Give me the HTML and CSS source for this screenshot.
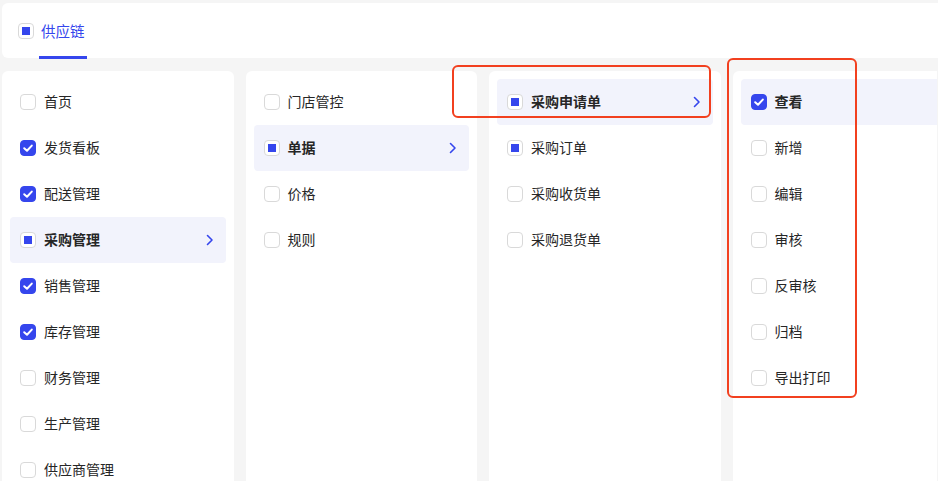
FILE: index.html
```html
<!DOCTYPE html>
<html lang="zh-CN">
<head>
<meta charset="utf-8">
<title>供应链权限</title>
<link rel="stylesheet" href="styles.css">
</head>
<body>
<div class="page">
  <div class="tabs-card">
    <div class="tab">
      <span class="cb cb-half"></span>
      <span class="tab-label">供应链</span>
    </div>
  </div>

  <div class="columns">
    <div class="col">
      <div class="row"><span class="cb"></span><span class="txt">首页</span></div>
      <div class="row"><span class="cb cb-on"><svg viewBox="0 0 16 16"><polyline points="4.2,8.2 7,10.8 11.8,5.6"/></svg></span><span class="txt">发货看板</span></div>
      <div class="row"><span class="cb cb-on"><svg viewBox="0 0 16 16"><polyline points="4.2,8.2 7,10.8 11.8,5.6"/></svg></span><span class="txt">配送管理</span></div>
      <div class="row row-active"><span class="cb cb-half"></span><span class="txt">采购管理</span><svg class="chev" viewBox="0 0 8 12"><polyline points="1.5,1.5 6,6 1.5,10.5"/></svg></div>
      <div class="row"><span class="cb cb-on"><svg viewBox="0 0 16 16"><polyline points="4.2,8.2 7,10.8 11.8,5.6"/></svg></span><span class="txt">销售管理</span></div>
      <div class="row"><span class="cb cb-on"><svg viewBox="0 0 16 16"><polyline points="4.2,8.2 7,10.8 11.8,5.6"/></svg></span><span class="txt">库存管理</span></div>
      <div class="row"><span class="cb"></span><span class="txt">财务管理</span></div>
      <div class="row"><span class="cb"></span><span class="txt">生产管理</span></div>
      <div class="row"><span class="cb"></span><span class="txt">供应商管理</span></div>
    </div>

    <div class="col">
      <div class="row"><span class="cb"></span><span class="txt">门店管控</span></div>
      <div class="row row-active"><span class="cb cb-half"></span><span class="txt">单据</span><svg class="chev" viewBox="0 0 8 12"><polyline points="1.5,1.5 6,6 1.5,10.5"/></svg></div>
      <div class="row"><span class="cb"></span><span class="txt">价格</span></div>
      <div class="row"><span class="cb"></span><span class="txt">规则</span></div>
    </div>

    <div class="col">
      <div class="row row-active"><span class="cb cb-half"></span><span class="txt">采购申请单</span><svg class="chev" viewBox="0 0 8 12"><polyline points="1.5,1.5 6,6 1.5,10.5"/></svg></div>
      <div class="row"><span class="cb cb-half"></span><span class="txt">采购订单</span></div>
      <div class="row"><span class="cb"></span><span class="txt">采购收货单</span></div>
      <div class="row"><span class="cb"></span><span class="txt">采购退货单</span></div>
    </div>

    <div class="col col-wide">
      <div class="row row-active"><span class="cb cb-on"><svg viewBox="0 0 16 16"><polyline points="4.2,8.2 7,10.8 11.8,5.6"/></svg></span><span class="txt">查看</span></div>
      <div class="row"><span class="cb"></span><span class="txt">新增</span></div>
      <div class="row"><span class="cb"></span><span class="txt">编辑</span></div>
      <div class="row"><span class="cb"></span><span class="txt">审核</span></div>
      <div class="row"><span class="cb"></span><span class="txt">反审核</span></div>
      <div class="row"><span class="cb"></span><span class="txt">归档</span></div>
      <div class="row"><span class="cb"></span><span class="txt">导出打印</span></div>
    </div>
  </div>

  <div class="mark mark-1"></div>
  <div class="mark mark-2"></div>
</div>
</body>
</html>
```

FILE: styles.css
```css
* {
  box-sizing: border-box;
}

html, body {
  margin: 0;
  padding: 0;
  background: #f5f5f5;
  overflow: hidden;
}

body {
  font-family: "Noto Sans CJK SC", "Noto Sans", sans-serif;
  font-size: 14px;
  color: #262626;
}

.page {
  position: relative;
  width: 938px;
  height: 481px;
  padding: 3px 0 0 2px;
  overflow: hidden;
}

.tabs-card {
  width: 936px;
  height: 55px;
  background: #fff;
  border-radius: 6px 0 0 6px;
  padding-left: 16px;
  display: flex;
}

.tab {
  display: flex;
  align-items: center;
  height: 56px;
}

.tab .cb {
  margin-top: -1px;
}

.tab-label {
  height: 56px;
  display: flex;
  align-items: center;
  margin-left: 5px;
  padding: 2px 2px 0;
  color: #3546ed;
  font-size: 14.5px;
  border-bottom: 3px solid #3546ed;
}

.columns {
  margin-top: 13px;
  display: grid;
  grid-template-columns: 231.5px 231.5px 231.5px 204px;
  column-gap: 12px;
}

.col {
  background: #fff;
  border-radius: 6px;
  height: 420px;
  padding: 8px;
}

.col-wide {
  border-radius: 6px 0 0 6px;
  padding-right: 0;
}

.row {
  height: 46px;
  display: flex;
  align-items: center;
  padding: 0 12px 0 10px;
  border-radius: 4px;
  gap: 8px;
}

.col-wide .row-active {
  border-radius: 4px 0 0 4px;
}

.row-active {
  background: #f2f3fc;
}

.row-active .txt {
  font-weight: 700;
}

.txt {
  flex: 1;
  line-height: 20px;
  margin-top: -2px;
}

.cb {
  width: 16px;
  height: 16px;
  flex: 0 0 16px;
  border: 1px solid #d9d9d9;
  border-radius: 4px;
  background: #fff;
  display: flex;
  align-items: center;
  justify-content: center;
}

.cb-half::after {
  content: "";
  width: 8px;
  height: 8px;
  background: #3546ed;
}

.cb-on {
  background: #3546ed;
  border-color: #3546ed;
}

.cb-on svg {
  width: 16px;
  height: 16px;
  flex: 0 0 16px;
}

.cb-on polyline {
  fill: none;
  stroke: #fff;
  stroke-width: 2;
  stroke-linecap: round;
  stroke-linejoin: round;
}

.chev {
  width: 8px;
  height: 12px;
}

.chev polyline {
  fill: none;
  stroke: #3546ed;
  stroke-width: 1.6;
  stroke-linecap: round;
  stroke-linejoin: round;
}

.mark {
  position: absolute;
  border: 2.5px solid #f2401f;
  border-radius: 6px;
}

.mark-1 {
  left: 452px;
  top: 65px;
  width: 259px;
  height: 53px;
}

.mark-2 {
  left: 727px;
  top: 58px;
  width: 130px;
  height: 340px;
}
```
